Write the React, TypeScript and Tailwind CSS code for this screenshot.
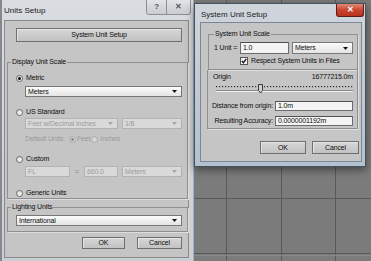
import React from "react";

// --- small controls ---

function Arrow({ disabled = false }: { disabled?: boolean }) {
    return (
        <svg width="5" height="3" viewBox="0 0 5 3" className="shrink-0">
            <path d="M0 0h5L2.5 3z" fill={disabled ? "#a4a4a4" : "#111"} />
        </svg>
    );
}

function Dropdown({ value, disabled = false, className = "" }: { value: string, disabled?: boolean, className?: string }) {
    return (
        <div
            className={`flex items-center justify-between pl-[2px] pr-[4px] border ${disabled
                ? "border-[#b2b2b2] bg-[#d9d9d9] text-[#9c9c9c]"
                : "border-[#777] bg-linear-to-b from-[#fbfbfb] to-[#e4e4e4] text-[#0e0e0e]"} ${className}`}
        >
            <span>{value}</span>
            <Arrow disabled={disabled} />
        </div>
    );
}

function Field({ value, disabled = false, className = "" }: { value: string, disabled?: boolean, className?: string }) {
    return (
        <div
            className={`flex items-center pl-[2px] border ${disabled
                ? "border-[#b2b2b2] bg-[#d9d9d9] text-[#9c9c9c]"
                : "border-[#6c6c6c] border-t-[#505050] bg-[#f4f4f4] text-[#0e0e0e]"} ${className}`}
        >
            {value}
        </div>
    );
}

function Radio({ checked = false, disabled = false }: { checked?: boolean, disabled?: boolean }) {
    return (
        <span
            className={`w-[7px] h-[7px] shrink-0 rounded-full border flex items-center justify-center ${disabled
                ? "border-[#a9a9a9] bg-[#d6d6d6]"
                : "border-[#6a6a6a] bg-linear-to-br from-[#d8d8d8] to-[#fdfdfd]"}`}
        >
            {checked && <span className={`w-[3px] h-[3px] rounded-full ${disabled ? "bg-[#8a8a8a]" : "bg-[#111]"}`} />}
        </span>
    );
}

function Button({ label, className = "" }: { label: string, className?: string }) {
    return (
        <div
            className={`flex items-center justify-center border border-[#6f6f6f] bg-linear-to-b from-[#d6d6d6] to-[#c2c2c2] shadow-[inset_1px_1px_0_#e6e6e6] text-[#0e0e0e] ${className}`}
        >
            {label}
        </div>
    );
}

// --- Units Setup (left, inactive window) ---

function UnitsSetup() {
    return (
        <div className="w-[194px] h-[261px] shrink-0 flex flex-col bg-linear-to-b from-[#d9dce0] to-[#cbced2] border-l-[2px] border-r border-l-[#85898e] border-r-[#9fb0c2]">
            <div className="h-[20px] flex items-start">
                <span className="ml-[2px] mt-[6px] text-[8px] leading-[9px] tracking-normal text-[#1a1a1a]">Units Setup</span>
                <div className="ml-auto mr-[2px] flex border border-t-0 border-[#8c9096] rounded-b-[3px] overflow-hidden">
                    <div className="w-[20px] h-[14px] flex items-center justify-center bg-linear-to-b from-[#e2e4e7] to-[#c9ccd0] border-r border-[#8c9096] text-[8px] font-bold text-[#55585c]">?</div>
                    <div className="w-[23px] h-[14px] flex items-center justify-center bg-linear-to-b from-[#e2e4e7] to-[#c9ccd0] text-[8px] font-bold text-[#55585c]">✕</div>
                </div>
            </div>

            <div className="ml-[2px] w-[185px] h-[238px] flex flex-col border border-[#8a8a8a] bg-[#c5c5c5]">
                <Button label="System Unit Setup" className="mt-[7px] ml-[11px] w-[166px] h-[14px]" />

                <fieldset className="mt-[16px] ml-[2px] w-[181px] border border-[#8f8f8f] shadow-[1px_1px_0_#dedede] flex flex-col">
                    <legend className="ml-[3px] px-[1px] leading-[8px]">Display Unit Scale</legend>
                    <div className="mt-[8px] ml-[8px] h-[8px] flex items-center gap-[3px]">
                        <Radio checked />
                        <span>Metric</span>
                    </div>
                    <Dropdown value="Meters" className="mt-[4px] ml-[17px] w-[157px] h-[11px]" />

                    <div className="mt-[11px] ml-[8px] h-[8px] flex items-center gap-[3px]">
                        <Radio />
                        <span>US Standard</span>
                    </div>
                    <div className="mt-[2px] ml-[17px] flex gap-[4px]">
                        <Dropdown value="Feet w/Decimal Inches" disabled className="w-[93px] h-[11px]" />
                        <Dropdown value="1/8" disabled className="w-[60px] h-[11px]" />
                    </div>
                    <div className="mt-[6px] ml-[17px] h-[8px] flex items-center text-[#9a9a9a]">
                        <span>Default Units:</span>
                        <span className="ml-[4px]"><Radio checked disabled /></span>
                        <span className="ml-[1px]">Feet</span>
                        <span className="ml-[1px]"><Radio disabled /></span>
                        <span className="ml-[2px]">Inches</span>
                    </div>

                    <div className="mt-[12px] ml-[8px] h-[8px] flex items-center gap-[3px]">
                        <Radio />
                        <span>Custom</span>
                    </div>
                    <div className="mt-[3px] ml-[17px] flex items-center">
                        <Field value="FL" disabled className="w-[45px] h-[11px]" />
                        <span className="w-[14px] text-center text-[#8a8a8a]">=</span>
                        <Field value="660.0" disabled className="w-[34px] h-[11px]" />
                        <Dropdown value="Meters" disabled className="ml-[4px] w-[60px] h-[11px]" />
                    </div>

                    <div className="mt-[12px] mb-[1px] ml-[8px] h-[8px] flex items-center gap-[3px]">
                        <Radio />
                        <span>Generic Units</span>
                    </div>
                </fieldset>

                <fieldset className="mt-[4px] ml-[2px] w-[181px] border border-[#8f8f8f] shadow-[1px_1px_0_#dedede] flex flex-col">
                    <legend className="ml-[3px] px-[1px] leading-[8px]">Lighting Units</legend>
                    <Dropdown value="International" className="mt-[4px] mb-[5px] ml-[8px] w-[166px] h-[11px]" />
                </fieldset>

                <div className="mt-[5px] ml-[77px] flex gap-[12px]">
                    <Button label="OK" className="w-[43px] h-[12px]" />
                    <Button label="Cancel" className="w-[45px] h-[12px]" />
                </div>
            </div>
        </div>
    );
}

// --- System Unit Setup (right, active window) ---

function OriginSlider() {
    const ticks = Array.from({ length: 46 }, (_, i) => i * 3);
    return (
        <svg width="138" height="12" viewBox="0 0 138 12" className="ml-[8px] mt-[1px]">
            {ticks.map(x => (
                <rect key={x} x={x} y="4" width="1.2" height="1.2" fill="#2e2e2e" />
            ))}
            <line x1="0" y1="9.5" x2="137" y2="9.5" stroke="#eeeeee" strokeWidth="1" />
            <line x1="0" y1="8.5" x2="137" y2="8.5" stroke="#8a8a8a" strokeWidth="1" />
            <path d="M42.5 2.5h4v6l-2 2.5l-2-2.5z" fill="#d2d2d2" stroke="#3a3a3a" strokeWidth="1" />
        </svg>
    );
}

function SystemUnitSetup() {
    return (
        <div className="mt-[3px] w-[172px] h-[164px] flex flex-col border border-[#45515d] bg-linear-to-b from-[#d0d5db] to-[#b2c1d0] shadow-[0_3px_8px_rgba(0,0,0,0.45)]">
            <div className="h-[18px] flex items-start">
                <span className="ml-[6px] mt-[6px] text-[8px] leading-[9px] tracking-normal text-[#1a1a1a]">System Unit Setup</span>
                <div className="ml-auto mr-[1px] w-[28px] h-[13px] flex items-center justify-center rounded-b-[3px] border border-t-0 border-[#5a1e16] bg-linear-to-b from-[#e08a78] via-[#c8432f] to-[#b8321e] text-[8px] font-bold text-white">
                    ✕
                </div>
            </div>

            <div className="ml-[5px] w-[162px] h-[140px] flex flex-col border border-[#7c8895] bg-[#c5c5c5]">
                <fieldset className="mt-[7px] ml-[7px] w-[150px] border border-[#8f8f8f] shadow-[1px_1px_0_#dedede] flex flex-col">
                    <legend className="ml-[5px] px-[1px] leading-[8px]">System Unit Scale</legend>
                    <div className="mt-[4px] flex items-center">
                        <span className="ml-[5px] w-[26px]">1 Unit =</span>
                        <Field value="1.0" className="w-[49px] h-[12px]" />
                        <Dropdown value="Meters" className="ml-[3px] w-[61px] h-[12px]" />
                    </div>
                    <div className="mt-[3px] mb-[4px] ml-[31px] h-[8px] flex items-center gap-[3px]">
                        <span className="w-[8px] h-[8px] border border-[#555] bg-[#f2f2f2] flex items-center justify-center">
                            <svg width="6" height="6" viewBox="0 0 6 6">
                                <path d="M0.8 3l1.6 1.7L5.3 0.9" fill="none" stroke="#111" strokeWidth="1.3" />
                            </svg>
                        </span>
                        <span>Respect System Units in Files</span>
                    </div>
                </fieldset>

                <div className="ml-[6px] w-[151px] h-[59px] flex flex-col border border-t-0 border-[#8f8f8f] shadow-[1px_1px_0_#dedede]">
                    <div className="mt-[3px] h-[8px] flex items-center justify-between pl-[5px] pr-[4px]">
                        <span>Origin</span>
                        <span>16777215.0m</span>
                    </div>
                    <OriginSlider />
                    <div className="mt-[7px] flex items-center">
                        <span className="w-[66px] text-right pr-[1px]">Distance from origin:</span>
                        <Field value="1.0m" className="ml-[1px] w-[78px] h-[10px]" />
                    </div>
                    <div className="mt-[5px] flex items-center">
                        <span className="w-[66px] text-right pr-[1px]">Resulting Accuracy:</span>
                        <Field value="0.0000001192m" className="ml-[1px] w-[78px] h-[10px]" />
                    </div>
                </div>

                <div className="mt-[12px] ml-[59px] flex gap-[6px]">
                    <Button label="OK" className="w-[46px] h-[13px]" />
                    <Button label="Cancel" className="w-[47px] h-[13px]" />
                </div>
            </div>
        </div>
    );
}

// --- viewport behind the dialogs ---

function ViewportGrid() {
    return (
        <svg width="177" height="261" viewBox="0 0 177 261" className="absolute inset-0">
            {[32, 87, 141].map(x => (
                <line key={x} x1={x + 0.5} y1="0" x2={x + 0.5} y2="261" stroke="#595959" strokeWidth="1" />
            ))}
            {[198, 253].map(y => (
                <line key={y} x1="0" y1={y + 0.5} x2="177" y2={y + 0.5} stroke="#595959" strokeWidth="1" />
            ))}
            <line x1="0" y1="255.5" x2="177" y2="255.5" stroke="#8a8a8a" strokeWidth="1" />
        </svg>
    );
}

export default function App() {
    return (
        <div className="w-[371px] h-[261px] flex overflow-hidden bg-[#7b7b7b] font-['Liberation_Sans',Arial,sans-serif] text-[7px] leading-[8px] tracking-[-0.15px] text-[#0e0e0e]">
            <UnitsSetup />
            <div className="relative flex-1 h-full">
                <ViewportGrid />
                <div className="relative">
                    <SystemUnitSetup />
                </div>
            </div>
        </div>
    );
}
